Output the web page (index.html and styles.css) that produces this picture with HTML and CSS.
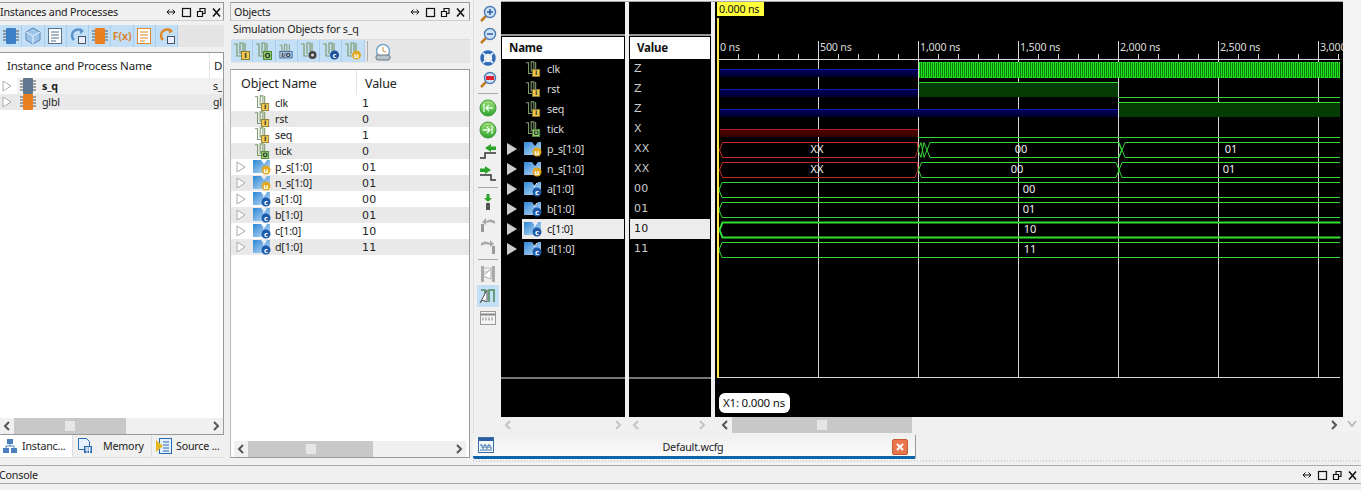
FILE: index.html
```html
<!DOCTYPE html>
<html lang="en">
<head>
  <meta charset="UTF-8">
  <title>Simulation</title>
  <link rel="stylesheet" href="styles.css">
</head>
<body>
  <svg class="defs" width="0" height="0">
    <defs>
      <linearGradient id="g-blue" x1="0" y1="0" x2="1" y2="1"><stop offset="0" stop-color="#2f86d6"/><stop offset="1" stop-color="#c4e0f6"/></linearGradient>
      <linearGradient id="g-green" x1="0" y1="0" x2="0" y2="1"><stop offset="0" stop-color="#a4e07c"/><stop offset="1" stop-color="#2fa52f"/></linearGradient>
      <symbol id="i-chip" viewBox="0 0 16 18">
        <path d="M0 4h16M0 7h16M0 10h16M0 13h16" stroke="#555" stroke-width="1.2"/>
        <rect x="3" y="1" width="10" height="16" rx="1" fill="currentColor"/>
      </symbol>
      <symbol id="i-bit" viewBox="0 0 18 18">
        <path d="M1 2h3v12h4M7 12V1h3v8M12 1v9" fill="none" stroke="#7f9a6c" stroke-width="1.2"/>
        <rect class="badge" x="8.5" y="9.5" width="8" height="8" fill="#f2c94c" stroke="#8a7a3a"/>
        <text class="badge-text" x="12.5" y="16">I</text>
      </symbol>
      <symbol id="i-bit-o" viewBox="0 0 18 18">
        <path d="M1 2h3v12h4M7 12V1h3v8M12 1v9" fill="none" stroke="#7f9a6c" stroke-width="1.2"/>
        <rect x="8.5" y="9.5" width="8" height="8" fill="#8fd06a" stroke="#4f8a3a"/>
        <text class="badge-text" x="12.5" y="16">O</text>
      </symbol>
      <symbol id="i-bit-io" viewBox="0 0 22 18">
        <path d="M3 2h3v8M9 10V1h3v9M15 1v9" fill="none" stroke="#7f9a6c" stroke-width="1.2"/>
        <rect x="3.5" y="9.5" width="15" height="8" fill="#a8c8e8" stroke="#3a5a8a"/>
        <text class="badge-text" x="11" y="16">I/O</text>
      </symbol>
      <symbol id="i-bit-dot" viewBox="0 0 18 18">
        <path d="M1 2h3v12h4M7 12V1h3v8M12 1v9" fill="none" stroke="#7f9a6c" stroke-width="1.2"/>
        <circle cx="12.5" cy="13" r="4" fill="#444"/><circle cx="12.5" cy="13" r="1.5" fill="#ddd"/>
      </symbol>
      <symbol id="i-bit-c" viewBox="0 0 18 18">
        <path d="M1 2h3v12h4M7 12V1h3v8M12 1v9" fill="none" stroke="#7f9a6c" stroke-width="1.2"/>
        <circle cx="12.5" cy="13" r="4.5" fill="#1e4f9a"/>
        <text class="badge-text light" x="12.5" y="15.5">c</text>
      </symbol>
      <symbol id="i-bit-u" viewBox="0 0 18 18">
        <path d="M1 2h3v12h4M7 12V1h3v8M12 1v9" fill="none" stroke="#7f9a6c" stroke-width="1.2"/>
        <circle cx="12.5" cy="13" r="4.5" fill="#e0a820"/>
        <text class="badge-text light" x="12.5" y="15.5">u</text>
      </symbol>
      <symbol id="i-bus-c" viewBox="0 0 18 16">
        <path d="M0 1h8l3 4 3-4h3v9l-4 4H0z" fill="url(#g-blue)"/>
        <path d="M10 6l3-4" stroke="#fff"/>
        <circle cx="13" cy="11" r="4.5" fill="#1e5aa8"/>
        <text class="badge-text light" x="13" y="13.5">c</text>
      </symbol>
      <symbol id="i-bus-u" viewBox="0 0 18 16">
        <path d="M0 1h8l3 4 3-4h3v9l-4 4H0z" fill="url(#g-blue)"/>
        <circle cx="13" cy="11" r="4.5" fill="#e0a820"/>
        <text class="badge-text light" x="13" y="13.5">u</text>
      </symbol>
      <symbol id="i-doc" viewBox="0 0 18 18">
        <rect x="2.500" y="1.500" width="13" height="15" fill="#fff" stroke="currentColor"/>
        <path d="M5 5h8M5 8h8M5 11h8M5 14h5" stroke="currentColor"/>
      </symbol>
      <symbol id="i-refresh" viewBox="0 0 18 18">
        <path d="M13 4A6 6 0 1 0 5 13" fill="none" stroke="currentColor" stroke-width="2.500"/>
        <path d="M11 1l4 3-4 3z" fill="currentColor"/>
        <rect x="9.500" y="9.500" width="7" height="7" fill="#eef" stroke="#456"/>
      </symbol>
      <symbol id="i-cube" viewBox="0 0 18 18">
        <path d="M9 1l7 4v8l-7 4-7-4V5z" fill="#9cc4e8" stroke="#5a86b4"/>
        <path d="M2 5l7 4 7-4M9 9v8" fill="none" stroke="#e8f4fc"/>
      </symbol>
      <symbol id="i-zoom" viewBox="0 0 18 18">
        <path d="M8 10l-6 6" stroke="#c07a20" stroke-width="2.500"/>
        <circle cx="11" cy="7" r="5.500" fill="#cfe2f6" stroke="#4a7ab4" stroke-width="1.400"/>
      </symbol>
      <symbol id="i-wave" viewBox="0 0 16 16">
        <rect x=".5" y=".5" width="15" height="15" fill="#f4f8fc" stroke="#3a6ea8"/>
        <rect x="1" y="1" width="14" height="3" fill="#2a5ea0"/>
        <path d="M2 8h2v3h2V8h2v3h2V8h2v3h2M2 13h12" fill="none" stroke="#3a6ea8"/>
      </symbol>
      <symbol id="i-lt" viewBox="0 0 8 10"><path d="M6 1L2 5l4 4" fill="none" stroke="currentColor" stroke-width="2"/></symbol>
      <symbol id="i-gt" viewBox="0 0 8 10"><path d="M2 1l4 4-4 4" fill="none" stroke="currentColor" stroke-width="2"/></symbol>
      <symbol id="i-tri" viewBox="0 0 10 12"><path d="M1 1l8 5-8 5z" fill="#fff" stroke="#aaa"/></symbol>
      <symbol id="i-tri-solid" viewBox="0 0 10 12"><path d="M0 0l10 6-10 6z" fill="#ccc"/></symbol>
      <symbol id="i-win" viewBox="0 0 54 12">
        <path d="M0 6h8M2.500 3.500L0 6l2.500 2.500M5.500 3.500L8 6l-2.500 2.500" fill="none" stroke="#111"/>
        <rect x="15.500" y="2.500" width="8" height="8" fill="none" stroke="#111" stroke-width="1.200"/>
        <path d="M30.500 5.500h5v5h-5zM33 5.500v-3h5v5h-2.500" fill="none" stroke="#111" stroke-width="1.200"/>
        <path d="M46 2.500l7 8M53 2.500l-7 8" stroke="#111" stroke-width="1.600"/>
      </symbol>
    </defs>
  </svg>

  <div class="shell">
    <!-- instances -->
    <section class="panel panel-inst">
      <div class="titlebar"><span>Instances and Processes</span><svg class="win-btns"><use href="#i-win"/></svg></div>
      <div class="tools">
        <button class="tool"><svg class="chip-blue"><use href="#i-chip"/></svg></button>
        <button class="tool"><svg><use href="#i-cube"/></svg></button>
        <button class="tool"><svg class="ink-slate"><use href="#i-doc"/></svg></button>
        <button class="tool"><svg class="ink-blue"><use href="#i-refresh"/></svg></button>
        <button class="tool"><svg class="chip-orange"><use href="#i-chip"/></svg></button>
        <button class="tool fx">F(x)</button>
        <button class="tool"><svg class="ink-orange"><use href="#i-doc"/></svg></button>
        <button class="tool"><svg class="ink-orange"><use href="#i-refresh"/></svg></button>
      </div>
      <div class="tree-box">
        <div class="tree-head"><span class="head-name">Instance and Process Name</span><span class="head-d">D</span></div>
        <div class="tree-row soft"><svg class="tri"><use href="#i-tri"/></svg><svg class="chip chip-slate"><use href="#i-chip"/></svg><b class="tree-name">s_q</b><span class="tree-d">s_</span></div>
        <div class="tree-row grey"><svg class="tri"><use href="#i-tri"/></svg><svg class="chip chip-orange"><use href="#i-chip"/></svg><span class="tree-name">glbl</span><span class="tree-d">gl</span></div>
        <div class="fill"></div>
        <div class="hscroll">
          <svg class="arrow"><use href="#i-lt"/></svg>
          <div class="thumb thumb-inst"><i></i></div>
          <div class="fill"></div>
          <svg class="arrow"><use href="#i-gt"/></svg>
        </div>
      </div>
      <div class="tabs">
        <div class="tab tab-on tab-a">
          <svg class="tab-ico" viewBox="0 0 16 16"><path d="M5 1h6v5H5zM1 10h6v5H1zM9 10h6v5H9z" fill="#4a7fc0"/><path d="M8 6v2M4 10V8h8v2" fill="none" stroke="#4a7fc0"/></svg>
          Instanc...
        </div>
        <div class="tab tab-b">
          <svg class="tab-ico" viewBox="0 0 16 16"><path d="M1.500.5h8l3 3v8h-11z" fill="#e4f0fa" stroke="#2a6ab0"/><rect x="7" y="8" width="8" height="7" fill="#2a6ab0"/><path d="M8 10h6M8 12h6M10 9v6M12.500 9v6" stroke="#fff"/></svg>
          <span class="tab-mem">Memory</span>
        </div>
        <div class="tab tab-c">
          <svg class="tab-ico" viewBox="0 0 16 16"><rect x="3.500" y=".5" width="12" height="15" fill="#e4f0fa" stroke="#2a6ab0"/><path d="M7 4h6M7 7h6M7 10h6M7 13h6" stroke="#2a6ab0"/><path d="M0 2l7 6-7 6z" fill="#e6b820"/></svg>
          Source ...
        </div>
      </div>
    </section>

    <!-- objects -->
    <section class="panel panel-obj">
      <div class="titlebar boxed"><span>Objects</span><svg class="win-btns"><use href="#i-win"/></svg></div>
      <div class="obj-sub">Simulation Objects for s_q</div>
      <div class="tools obj-tools">
        <button class="tool"><svg><use href="#i-bit"/></svg></button>
        <button class="tool"><svg><use href="#i-bit-o"/></svg></button>
        <button class="tool"><svg><use href="#i-bit-io"/></svg></button>
        <button class="tool"><svg><use href="#i-bit-dot"/></svg></button>
        <button class="tool"><svg><use href="#i-bit-c"/></svg></button>
        <button class="tool"><svg><use href="#i-bit-u"/></svg></button>
        <span class="tool-sep"></span>
        <svg class="clock" viewBox="0 0 18 18"><circle cx="9" cy="8" r="6.500" fill="#fff" stroke="#7aa4c8" stroke-width="1.500"/><path d="M9 4v4l3 1" fill="none" stroke="#c09040"/><rect x="2" y="12" width="14" height="5" rx="2" fill="#b8c4cc" stroke="#6a7680"/></svg>
      </div>
      <div class="obj-box">
        <div class="obj-head"><span class="col-name">Object Name</span><span class="col-val">Value</span></div>
        <div class="obj-row"><span class="tri-slot"></span><svg class="sig"><use href="#i-bit"/></svg><span class="obj-name">clk</span><span class="obj-val">1</span></div>
        <div class="obj-row grey"><span class="tri-slot"></span><svg class="sig"><use href="#i-bit"/></svg><span class="obj-name">rst</span><span class="obj-val">0</span></div>
        <div class="obj-row"><span class="tri-slot"></span><svg class="sig"><use href="#i-bit"/></svg><span class="obj-name">seq</span><span class="obj-val">1</span></div>
        <div class="obj-row grey"><span class="tri-slot"></span><svg class="sig"><use href="#i-bit-o"/></svg><span class="obj-name">tick</span><span class="obj-val">0</span></div>
        <div class="obj-row"><svg class="tri-slot"><use href="#i-tri"/></svg><svg class="sig"><use href="#i-bus-u"/></svg><span class="obj-name">p_s[1:0]</span><span class="obj-val">01</span></div>
        <div class="obj-row grey"><svg class="tri-slot"><use href="#i-tri"/></svg><svg class="sig"><use href="#i-bus-u"/></svg><span class="obj-name">n_s[1:0]</span><span class="obj-val">01</span></div>
        <div class="obj-row"><svg class="tri-slot"><use href="#i-tri"/></svg><svg class="sig"><use href="#i-bus-c"/></svg><span class="obj-name">a[1:0]</span><span class="obj-val">00</span></div>
        <div class="obj-row grey"><svg class="tri-slot"><use href="#i-tri"/></svg><svg class="sig"><use href="#i-bus-c"/></svg><span class="obj-name">b[1:0]</span><span class="obj-val">01</span></div>
        <div class="obj-row"><svg class="tri-slot"><use href="#i-tri"/></svg><svg class="sig"><use href="#i-bus-c"/></svg><span class="obj-name">c[1:0]</span><span class="obj-val">10</span></div>
        <div class="obj-row grey"><svg class="tri-slot"><use href="#i-tri"/></svg><svg class="sig"><use href="#i-bus-c"/></svg><span class="obj-name">d[1:0]</span><span class="obj-val">11</span></div>
        <div class="fill"></div>
        <div class="hscroll obj-scroll">
          <svg class="arrow"><use href="#i-lt"/></svg>
          <div class="thumb thumb-obj"><i></i></div>
          <div class="fill"></div>
          <svg class="arrow"><use href="#i-gt"/></svg>
        </div>
      </div>
    </section>

    <!-- wave window -->
    <section class="wave-win">
      <div class="wave-top">
        <div class="side-tools">
          <svg class="side" viewBox="0 0 18 18"><use href="#i-zoom"/><path d="M8 7h6M11 4v6" stroke="#2a5ea0" stroke-width="1.500"/></svg>
          <svg class="side" viewBox="0 0 18 18"><use href="#i-zoom"/><path d="M8 7h6" stroke="#2a5ea0" stroke-width="1.500"/></svg>
          <svg class="side" viewBox="0 0 18 18"><circle cx="9" cy="9" r="6" fill="none" stroke="#2a6ab8" stroke-width="3.500"/><path d="M4 4l3 3M14 4l-3 3M4 14l3-3M14 14l-3-3" stroke="#dceaf8" stroke-width="2"/></svg>
          <svg class="side" viewBox="0 0 18 18"><use href="#i-zoom"/><rect x="7" y="5" width="8" height="4" fill="#e02030"/></svg>
          <span class="side-sep"></span>
          <svg class="side" viewBox="0 0 18 18"><circle cx="9" cy="9" r="8" fill="url(#g-green)" stroke="#3a9a3a"/><path d="M5 5v8M14 9H7M10 6L7 9l3 3" fill="none" stroke="#eaffea" stroke-width="1.300"/></svg>
          <svg class="side" viewBox="0 0 18 18"><circle cx="9" cy="9" r="8" fill="url(#g-green)" stroke="#3a9a3a"/><path d="M13 5v8M4 9h7M8 6l3 3-3 3" fill="none" stroke="#eaffea" stroke-width="1.300"/></svg>
          <svg class="side" viewBox="0 0 18 18"><path d="M1 15h5V10h11" fill="none" stroke="#333" stroke-width="1.500"/><path d="M6 5l6-4v2.500h5v3.500h-5V9z" fill="#2aa52a"/></svg>
          <svg class="side" viewBox="0 0 18 18"><path d="M1 10h11v5h5" fill="none" stroke="#333" stroke-width="1.500"/><path d="M12 5L6 1v2.500H1v3.500h5V9z" fill="#2aa52a"/></svg>
          <span class="side-sep"></span>
          <svg class="side" viewBox="0 0 18 18"><rect x="7" y="10" width="4" height="7" fill="#555"/><path d="M9 9L5 5h2.500V1h3v4H13z" fill="#2aa52a"/></svg>
          <svg class="side" viewBox="0 0 18 18"><rect x="2" y="9" width="3" height="8" fill="#999"/><path d="M16 6c-3-2-6-2-9 0V3L3 7l4 3V8c3-1 6-1 9 1z" fill="#aaa"/></svg>
          <svg class="side" viewBox="0 0 18 18"><rect x="13" y="9" width="3" height="8" fill="#999"/><path d="M2 6c3-2 6-2 9 0V3l4 4-4 3V8c-3-1-6-1-9 1z" fill="#aaa"/></svg>
          <span class="side-sep"></span>
          <svg class="side" viewBox="0 0 18 18"><path d="M2 1h3v16H2zM13 1h3v16h-3z" fill="#aaa"/><path d="M5 3h8M5 7h8M5 11h8" stroke="#bbb"/><path d="M12 4v10l-8-3z" fill="#fff" stroke="#aaa"/></svg>
          <span class="side-on"><svg class="side" viewBox="0 0 18 18"><path d="M2 3h4v12M10 15V3h5v12" fill="none" stroke="#4a8a5a" stroke-width="1.500"/><path d="M8 3v12l-4-2-3 3z" fill="#fff" stroke="#555"/></svg></span>
          <svg class="side" viewBox="0 0 18 18"><rect x="1.500" y="2.500" width="15" height="13" fill="#f4f4f4" stroke="#999"/><path d="M2 5.500h14" stroke="#888" stroke-width="2"/><path d="M3 10h12" stroke="#bbb" stroke-dasharray="2 1" stroke-width="3"/></svg>
        </div>

        <div class="wave-main">
          <div class="wave-panes">
            <div class="sig-col col-names">
              <div class="sig-top"></div>
              <div class="sig-head"><b>Name</b></div>
              <div class="sig-rows">
                <div class="sig-row"><span class="tri-w"></span><svg class="sig-ico"><use href="#i-bit"/></svg><span>clk</span></div>
                <div class="sig-row"><span class="tri-w"></span><svg class="sig-ico"><use href="#i-bit"/></svg><span>rst</span></div>
                <div class="sig-row"><span class="tri-w"></span><svg class="sig-ico"><use href="#i-bit"/></svg><span>seq</span></div>
                <div class="sig-row"><span class="tri-w"></span><svg class="sig-ico"><use href="#i-bit-o"/></svg><span>tick</span></div>
                <div class="sig-row"><svg class="tri-w"><use href="#i-tri-solid"/></svg><svg class="sig-ico"><use href="#i-bus-u"/></svg><span>p_s[1:0]</span></div>
                <div class="sig-row"><svg class="tri-w"><use href="#i-tri-solid"/></svg><svg class="sig-ico"><use href="#i-bus-u"/></svg><span>n_s[1:0]</span></div>
                <div class="sig-row"><svg class="tri-w"><use href="#i-tri-solid"/></svg><svg class="sig-ico"><use href="#i-bus-c"/></svg><span>a[1:0]</span></div>
                <div class="sig-row"><svg class="tri-w"><use href="#i-tri-solid"/></svg><svg class="sig-ico"><use href="#i-bus-c"/></svg><span>b[1:0]</span></div>
                <div class="sig-row row-sel"><svg class="tri-w"><use href="#i-tri-solid"/></svg><div class="sel-box"><svg class="sig-ico"><use href="#i-bus-c"/></svg><span>c[1:0]</span></div></div>
                <div class="sig-row"><svg class="tri-w"><use href="#i-tri-solid"/></svg><svg class="sig-ico"><use href="#i-bus-c"/></svg><span>d[1:0]</span></div>
              </div>
              <div class="sig-bottom"></div>
            </div>
            <div class="sig-col col-values">
              <div class="sig-top"></div>
              <div class="sig-head"><b>Value</b></div>
              <div class="sig-rows vals">
                <div class="val-row">Z</div>
                <div class="val-row">Z</div>
                <div class="val-row">Z</div>
                <div class="val-row">X</div>
                <div class="val-row">XX</div>
                <div class="val-row">XX</div>
                <div class="val-row">00</div>
                <div class="val-row">01</div>
                <div class="val-row val-sel">10</div>
                <div class="val-row">11</div>
              </div>
              <div class="sig-bottom"></div>
            </div>
            <svg class="wave" width="628" height="415" viewBox="715 2 628 415">
              <defs>
                <linearGradient id="fade-blue" x1="0" y1="0" x2="0" y2="1"><stop offset="0" stop-color="#000060"/><stop offset="1" stop-color="#000030"/></linearGradient>
                <linearGradient id="fade-red" x1="0" y1="0" x2="0" y2="1"><stop offset="0" stop-color="#500000"/><stop offset="1" stop-color="#380000"/></linearGradient>
              </defs>
              <!-- ruler -->
              <path class="grid" d="M818.500 41v336M918.500 41v336M1018.500 41v336M1118.500 41v336M1218.500 41v336M1318.500 41v336"/>
              <path class="grid" d="M719 59.500h621M719 377.500h621"/>
              <path class="ticks" d="M738.500 54v5M758.500 54v5M778.500 54v5M798.500 54v5M838.500 54v5M858.500 54v5M878.500 54v5M898.500 54v5M938.500 54v5M958.500 54v5M978.500 54v5M998.500 54v5M1038.500 54v5M1058.500 54v5M1078.500 54v5M1098.500 54v5M1138.500 54v5M1158.500 54v5M1178.500 54v5M1198.500 54v5M1238.500 54v5M1258.500 54v5M1278.500 54v5M1298.500 54v5M1338.500 54v5"/>
              <g class="ruler-text">
                <text x="720" y="51">0 ns</text>
                <text x="820" y="51">500 ns</text>
                <text x="920" y="51">1,000 ns</text>
                <text x="1020" y="51">1,500 ns</text>
                <text x="1120" y="51">2,000 ns</text>
                <text x="1220" y="51">2,500 ns</text>
                <text x="1320" y="51">3,000 ns</text>
              </g>
              <!-- bit signals -->
              <rect class="z-band" x="720" y="69" width="198" height="8"/>
              <rect class="z-band" x="720" y="89" width="198" height="8"/>
              <rect class="z-band" x="720" y="109" width="398" height="8"/>
              <path class="z-line" d="M720 69.500h198M720 89.500h198M720 109.500h398"/>
              <rect class="x-band" x="720" y="129" width="198" height="8"/>
              <path class="x-line" d="M720 129.500h198"/>
              <rect class="clk-band" x="919" y="62" width="421" height="16"/>
              <path class="clk-edges" d="M919 70H1340"/>
              <path class="clk-flat" d="M919 62.500H1340"/>
              <path class="clk-flat" d="M921 77.500H1340"/>
              <rect class="hi-band" x="919" y="82" width="199" height="15"/>
              <rect class="hi-band" x="1119" y="102" width="221" height="15"/>
              <path class="g-line" d="M918 82.500h200M1118 97.500h222M1118 102.500h222M918 137.500h422"/>
              <!-- buses -->
              <path class="x-bus" d="M917.500 142.500H722.500l-3 7.500 3 7.500H915l3-7.500z"/>
              <path class="x-bus" d="M917.500 162.500H722.500l-3 7.500 3 7.500H915l3-7.500z"/>
              <path class="g-line" d="M918 150l3-7.500 3 15 3-7.500-3-7.500-3 15zM927 150l3-7.500h188.500l3 7.500-3 7.500H930zM1119 142.500l6 15M1119 157.500l6-15M1125 142.500h215M1125 157.500h215"/>
              <path class="g-line" d="M918.500 170l3-7.500h194.500l3 7.500-3 7.500H921.500zM1119 170l3-7.500h218M1119 170l3 7.500h218"/>
              <path class="g-line" d="M719 190l3-7.500h618M719 190l3 7.500h618M719 210l3-7.500h618M719 210l3 7.500h618M719 250l3-7.500h618M719 250l3 7.500h618"/>
              <path class="g-thick" d="M719.500 230l3-7.500h618M719.500 230l3 7.500h618"/>
              <g class="bus-text">
                <text x="817" y="153">XX</text>
                <text x="817" y="173">XX</text>
                <text x="1021" y="153">00</text>
                <text x="1017" y="173">00</text>
                <text x="1231" y="153">01</text>
                <text x="1229" y="173">01</text>
                <text x="1029" y="193">00</text>
                <text x="1029" y="213">01</text>
                <text x="1030" y="233">10</text>
                <text x="1030" y="253">11</text>
              </g>
              <!-- cursor -->
              <rect class="cursor" x="717" y="18" width="2" height="360"/>
              <rect class="cursor-flag" x="717" y="2" width="47" height="14"/>
              <text class="flag-text" x="719" y="13">0.000 ns</text>
              <rect class="x1-box" x="719" y="393" width="71" height="20" rx="6"/>
              <text class="x1-text" x="723" y="407">X1: 0.000 ns</text>
            </svg>
          </div>
          <div class="wave-scrolls">
            <div class="hscroll off name-scroll">
              <svg class="arrow"><use href="#i-lt"/></svg><div class="fill"></div><svg class="arrow"><use href="#i-gt"/></svg>
            </div>
            <div class="hscroll off val-scroll">
              <svg class="arrow"><use href="#i-lt"/></svg><div class="fill"></div><svg class="arrow"><use href="#i-gt"/></svg>
            </div>
            <div class="hscroll main-scroll">
              <svg class="arrow"><use href="#i-lt"/></svg>
              <div class="thumb thumb-wave"><i></i></div>
              <div class="fill"></div>
              <svg class="arrow"><use href="#i-gt"/></svg>
            </div>
          </div>
        </div>

        <div class="v-strip">
          <svg class="down" viewBox="0 0 10 8"><path d="M1 1l4 5 4-5" fill="none" stroke="#bbb" stroke-width="2"/></svg>
        </div>
      </div>
      <div class="doc-tab">
        <svg class="doc-ico"><use href="#i-wave"/></svg>
        <span class="doc-name">Default.wcfg</span>
        <span class="doc-close"><svg viewBox="0 0 10 10" width="10" height="10"><path d="M2 2l6 6M8 2l-6 6" stroke="#fff" stroke-width="2"/></svg></span>
      </div>
      <div class="dots"></div>
    </section>
  </div>

  <div class="console">
    <span>Console</span>
    <svg class="win-btns"><use href="#i-win"/></svg>
  </div>
</body>
</html>
```
FILE: styles.css
```css
html, body {
  margin: 0;
  height: 100%;
  overflow: hidden;
  background: #f0f0f0;
  font-family: "Noto Sans", "Open Sans", sans-serif;
  font-size: 10.700px;
  letter-spacing: -.2px;
  color: #222;
}
.defs { position: absolute; }
.fill { flex: 1; }
button { font: inherit; padding: 0; }

.shell {
  display: flex;
  height: 466px;
  box-sizing: border-box;
  border-bottom: 1px solid #aaa;
}

/* docked panels */
.panel {
  display: flex;
  flex-direction: column;
}
.panel-inst { width: 224px; height: 456px; margin-top: 2px; margin-right: 5px; }
.panel-obj { width: 241px; height: 457px; margin-top: 2px; margin-right: 3px; }

.titlebar {
  display: flex;
  align-items: center;
  justify-content: space-between;
  box-sizing: border-box;
  height: 19px;
  border-top: 1px solid #999;
  border-bottom: 1px solid #ccc;
  border-right: 1px solid #999;
  white-space: nowrap;
  overflow: hidden;
  font-size: 10.700px;
}
.titlebar.boxed {
  margin-left: 1px;
  padding-left: 3px;
  border-left: 1px solid #bbb;
}
.win-btns {
  flex: none;
  width: 54px;
  height: 12px;
  margin-right: 2px;
}
.titlebar.boxed .win-btns { margin-right: 4px; }

.tools {
  display: flex;
  height: 22px;
  margin-top: 4px;
  background: #e4e4e4;
}
.tool {
  display: flex;
  align-items: center;
  justify-content: center;
  width: 22.300px;
  height: 22px;
  background: #c3dff6;
  border: 0;
  border-right: 1px solid #a9cdec;
}
.tool svg { width: 18px; height: 18px; }
.tool.fx { color: #d9822b; font-size: 10.500px; font-weight: bold; }
.chip-blue { color: #3d7fc6; }
.chip-slate { color: #5f7890; }
.chip-orange { color: #e8801f; }
.ink-slate { color: #55708a; }
.ink-blue { color: #5c92c8; }
.ink-orange { color: #e0862a; }
.badge-text {
  font-family: "DejaVu Sans", sans-serif;
  font-size: 7px;
  font-weight: bold;
  letter-spacing: 0;
  text-anchor: middle;
  fill: #333;
}
.badge-text.light { fill: #fff; }

.tree-box {
  flex: 1;
  display: flex;
  flex-direction: column;
  margin-top: 5px;
  background: #fff;
  border-top: 1px solid #999;
  border-right: 1px solid #999;
  border-bottom: 1px solid #999;
}
.tree-head {
  display: flex;
  align-items: center;
  height: 25px;
  font-size: 11.500px;
}
.head-name { margin-left: 7px; width: 202px; border-right: 1px solid #e4e4e4; line-height: 25px; }
.head-d { margin-left: 4px; }
.tree-row {
  display: flex;
  align-items: center;
  height: 16px;
}
.tree-row.soft { background: linear-gradient(90deg, #fff 17px, #f1f1f1 17px); }
.tree-row.grey, .obj-row.grey { background: #e9e9e9; }
.tri { width: 10px; height: 12px; margin-left: 2px; }
.chip { width: 16px; height: 18px; margin-left: 8px; }
.tree-name { margin-left: 6px; width: 171px; }
.tree-d { font-size: 10.500px; overflow: hidden; }

.hscroll {
  display: flex;
  align-items: center;
  height: 16px;
  background: #f0f0f0;
  color: #555;
}
.hscroll.off { color: #c4c4c4; }
.arrow { flex: none; width: 8px; height: 10px; margin: 0 3px; }
.thumb {
  flex: none;
  display: flex;
  align-items: center;
  justify-content: center;
  height: 16px;
  background: #c8c8c8;
}
.thumb i { width: 10px; height: 10px; background: #e6e6e6; }
.thumb-inst { width: 112px; }
.thumb-obj { width: 125px; }
.thumb-wave { width: 180px; }

.tabs {
  display: flex;
  height: 23px;
  margin-right: 1px;
  background: #f0f0f0;
}
.tab {
  display: flex;
  align-items: center;
  box-sizing: border-box;
  white-space: nowrap;
  border-bottom: 1px solid #ddd;
}
.tab-on { background: #fff; }
.tab-a { width: 72px; padding-left: 2px; }
.tab-b { width: 79px; padding-left: 4px; border-left: 1px solid #ddd; }
.tab-c { flex: 1; padding-left: 4px; border-left: 1px solid #ddd; }
.tab-ico { flex: none; width: 16px; height: 16px; margin-right: 4px; }
.tab-mem { margin-left: 6px; }

.obj-sub { height: 19px; line-height: 19px; margin-left: 4px; margin-top: -1px; }
.tools.obj-tools {
  margin-top: 0;
  margin-left: 2px;
  height: 23px;
  background: #e6e6e6;
  border-top: 1px solid #ddd;
}
.tool-sep { width: 1px; height: 20px; margin: 1px 6px 0 2px; background: #aaa; }
.clock { width: 18px; height: 18px; margin-top: 3px; }

.obj-box {
  flex: 1;
  display: flex;
  flex-direction: column;
  margin-top: 6px;
  background: #fff;
  border: 1px solid #999;
  border-left-color: #bbb;
  margin-bottom: 1px;
  margin-left: 1px;
}
.obj-head {
  display: flex;
  height: 25px;
  line-height: 27px;
  font-size: 12.500px;
  letter-spacing: -.1px;
}
.col-name { width: 126px; padding-left: 10px; box-sizing: border-box; border-right: 1px solid #e4e4e4; }
.col-val { margin-left: 8px; }
.obj-row {
  display: flex;
  align-items: center;
  height: 16px;
}
.tri-slot { flex: none; width: 10px; height: 12px; margin-left: 5px; }
.sig { flex: none; width: 18px; height: 16px; margin-left: 7px; }
.obj-name { width: 87px; margin-left: 4px; }
.obj-val { font-family: "DejaVu Sans", sans-serif; font-size: 11px; letter-spacing: .3px; }
.obj-scroll { margin-left: 3px; margin-right: 3px; }

/* wave window */
.wave-win {
  flex: 1;
  display: flex;
  flex-direction: column;
  min-width: 0;
}
.wave-top { display: flex; height: 433px; }
.side-tools {
  flex: none;
  display: flex;
  flex-direction: column;
  align-items: center;
  width: 28px;
  gap: 4px;
  padding-top: 5px;
  box-sizing: border-box;
  border-left: 1px solid #ddd;
}
.side { flex: none; width: 18px; height: 18px; }
.side-sep { flex: none; width: 20px; height: 1px; background: #aaa; margin-bottom: 1px; }
.side-on {
  display: flex;
  align-items: center;
  justify-content: center;
  width: 22px;
  height: 22px;
  margin: -2px 0;
  background: #c3dff6;
}
.wave-main {
  flex: none;
  width: 842px;
  display: flex;
  flex-direction: column;
  margin-top: 1px;
  border-top: 1px solid #aaa;
}
.wave-panes {
  display: flex;
  height: 415px;
  background: #f0f0f0;
}
.sig-col {
  display: flex;
  flex-direction: column;
  background: #000;
}
.col-names { width: 124px; margin-right: 4px; }
.col-values { width: 82px; margin-right: 4px; }
.sig-top {
  height: 32px;
  border-bottom: 2px solid #999;
  margin-bottom: 1px;
}
.sig-head {
  height: 22px;
  margin-left: 1px;
  margin-right: 1px;
  background: #fff;
  color: #111;
  font-size: 11.500px;
  line-height: 22px;
  padding-left: 7px;
}
.sig-rows { height: 318px; }
.sig-bottom {
  flex: 1;
  border-top: 2px solid #777;
}
.sig-row {
  display: flex;
  align-items: center;
  height: 20px;
  color: #ddd;
}
.tri-w { flex: none; width: 10px; height: 12px; margin-left: 6px; }
.sig-ico { flex: none; width: 18px; height: 16px; margin-left: 7px; margin-right: 5px; }
.sel-box {
  display: flex;
  align-items: center;
  flex: 1;
  align-self: stretch;
  margin-left: 5px;
  margin-right: 1px;
  background: #ececec;
  color: #111;
}
.sel-box .sig-ico { margin-left: 2px; }
.val-row {
  height: 20px;
  line-height: 20px;
  padding-left: 5px;
  color: #ccc;
  font-family: "DejaVu Sans", sans-serif;
  font-size: 11px;
  letter-spacing: .2px;
}
.val-sel { margin: 0 1px; padding-left: 4px; background: #ececec; color: #111; }
.wave { display: block; background: #000; font-family: "Noto Sans", sans-serif; }
.grid { stroke: #d8d8d8; fill: none; }
.ticks { stroke: #d8d8d8; fill: none; }
.ruler-text text { fill: #ddd; font-size: 10.700px; }
.z-band { fill: url(#fade-blue); }
.z-line { stroke: #0a1fa8; fill: none; }
.x-band { fill: url(#fade-red); }
.x-line { stroke: #b02020; fill: none; }
.hi-band { fill: #053c05; }
.clk-band { fill: #0a7a0a; }
.clk-edges { stroke: #22e622; stroke-width: 16px; stroke-dasharray: 1 1; fill: none; }
.clk-flat { stroke: #22e622; stroke-dasharray: 3 1; fill: none; }
.g-line { stroke: #33d433; fill: none; }
.g-thick { stroke: #33e033; stroke-width: 2; fill: none; }
.x-bus { stroke: #c42a2a; fill: none; }
.bus-text text { fill: #eee; font-size: 11px; letter-spacing: 0; text-anchor: middle; }
.cursor { fill: #ffe94a; }
.cursor-flag { fill: #ffff3c; }
.flag-text { font-size: 10.700px; fill: #111; }
.x1-box { fill: #fff; }
.x1-text { font-size: 11.500px; fill: #111; }

.wave-scrolls { display: flex; height: 16px; }
.name-scroll { width: 124px; margin-right: 4px; box-sizing: border-box; }
.val-scroll { width: 82px; margin-right: 4px; padding-right: 2px; box-sizing: border-box; }
.main-scroll { flex: 1; padding-left: 3px; padding-right: 2px; }
.v-strip {
  flex: none;
  display: flex;
  flex-direction: column;
  justify-content: flex-end;
  align-items: center;
  width: 18px;
  background: #f3f3f3;
  padding-bottom: 3px;
  box-sizing: border-box;
  height: 431px;
}
.down { width: 10px; height: 8px; }

.doc-tab {
  display: flex;
  align-items: center;
  box-sizing: border-box;
  width: 443px;
  height: 24px;
  margin-top: 2px;
  padding: 2px 7px 0 5px;
  background: linear-gradient(#f0f0f0, #fafafa);
  border-right: 1px solid #999;
  border-bottom: 3px solid #0f62ac;
  border-radius: 0 0 2px 2px;
}
.doc-ico { flex: none; width: 16px; height: 16px; margin-top: -3px; }
.doc-name { flex: 1; text-align: center; }
.doc-close {
  flex: none;
  display: flex;
  align-items: center;
  justify-content: center;
  width: 14px;
  height: 14px;
  background: #e9764d;
  border: 1px solid #c85a32;
  border-radius: 2px;
}
.dots {
  height: 2px;
  margin-top: 1px;
  background: repeating-linear-gradient(90deg, #cdd3da 0 1px, transparent 1px 3px);
}

.console {
  display: flex;
  align-items: center;
  justify-content: space-between;
  box-sizing: border-box;
  height: 18px;
  border-bottom: 1px solid #aaa;
  padding-right: 2px;
  margin-left: -1px;
}
```
